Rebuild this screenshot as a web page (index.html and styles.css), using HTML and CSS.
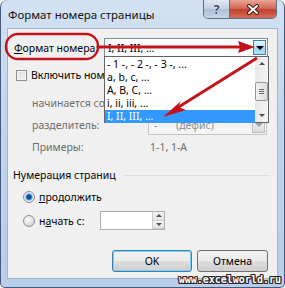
FILE: index.html
```html
<!DOCTYPE html>
<html lang="ru">
<head>
    <meta charset="UTF-8">
    <title>Формат номера страницы</title>
    <link rel="stylesheet" href="styles.css">
</head>
<body>
    <div class="window">
        <div class="titlebar">
            <span class="title">Формат номера страницы</span>
            <div class="caption-buttons">
                <div class="cap-btn help">?</div>
                <div class="cap-btn close">
                    <svg width="14" height="11" viewBox="0 0 14 11">
                        <path d="M3 2 L11 9 M11 2 L3 9" stroke="#4a1a14" stroke-width="4" stroke-linecap="round"/>
                        <path d="M3 2 L11 9 M11 2 L3 9" stroke="#fff" stroke-width="2" stroke-linecap="round"/>
                    </svg>
                </div>
            </div>
        </div>

        <div class="client">
            <div class="format-row">
                <span class="format-label"><u>Ф</u>ормат номера:</span>
                <div class="combo">
                    <span class="combo-text">I, II, III, ...</span>
                    <div class="combo-btn hot"><span class="tri"></span></div>

                    <div class="listbox">
                        <div class="list-items">
                            <div class="list-item">- 1 -, - 2 -, - 3 -, ...</div>
                            <div class="list-item">a, b, c, ...</div>
                            <div class="list-item">A, B, C, ...</div>
                            <div class="list-item">i, ii, iii, ...</div>
                            <div class="list-item selected">I, II, III, ...</div>
                        </div>
                        <div class="scrollbar">
                            <div class="sb-arrow"><span class="tri-up"></span></div>
                            <div class="sb-track">
                                <div class="sb-thumb"><span class="grip"></span></div>
                            </div>
                            <div class="sb-arrow"><span class="tri small"></span></div>
                        </div>
                    </div>
                </div>
            </div>

            <div class="check-row">
                <span class="checkbox"></span>
                <span>Включить номер главы</span>
            </div>

            <div class="chapter-block">
                <div class="dim-row">
                    <span class="dim-label">начинается со стиля</span>
                </div>
                <div class="dim-row">
                    <span class="dim-label">разделитель:</span>
                    <div class="combo disabled">
                        <span class="combo-text"><span class="dash">-</span>(дефис)</span>
                        <div class="combo-btn"><span class="tri pale"></span></div>
                    </div>
                </div>
                <div class="dim-row">
                    <span class="dim-label">Примеры:</span>
                    <span class="example">1-1, 1-A</span>
                </div>
            </div>

            <div class="group-title">
                <span>Нумерация страниц</span>
                <span class="group-line"></span>
            </div>

            <div class="radio-row">
                <span class="radio checked"></span>
                <span><u>п</u>родолжить</span>
            </div>
            <div class="radio-row second">
                <span class="radio"></span>
                <span class="radio-label">н<u>а</u>чать с:</span>
                <div class="spinbox">
                    <span class="spin-text"></span>
                    <div class="spin-btns">
                        <div class="spin-btn"><span class="tri-up tiny"></span></div>
                        <div class="spin-btn"><span class="tri tiny"></span></div>
                    </div>
                </div>
            </div>

            <div class="buttons">
                <div class="button default">OK</div>
                <div class="button cancel">Отмена</div>
            </div>
        </div>

        <svg class="marks" width="285" height="288" viewBox="0 0 285 288">
            <rect x="5" y="34" width="92" height="25" rx="12" ry="12" fill="none" stroke="#c3141b" stroke-width="2.4"/>
            <path d="M97 47 L240 47" stroke="#c3141b" stroke-width="3"/>
            <polygon points="254,47 237,41 239,47 237,53" fill="#c3141b"/>
            <path d="M256 58 L176 108" stroke="#c3141b" stroke-width="3"/>
            <polygon points="162,117 180,101 177,107 185,110" fill="#c3141b"/>
        </svg>

        <div class="watermark">www.excelworld.ru</div>
    </div>
</body>
</html>
```

FILE: styles.css
```css
body {
    margin: 0;
    font-family: "Noto Sans", "Liberation Sans", sans-serif;
    font-size: 10.5px;
    color: #000;
}

.window {
    position: relative;
    width: 285px;
    height: 288px;
    box-sizing: border-box;
    padding: 0 7px 9px 7px;
    border: 1px solid #45597a;
    border-top: 0;
    border-radius: 7px 7px 5px 5px;
    background: linear-gradient(#d3e2f3, #c1d5ec 40%, #b7cde8);
    overflow: hidden;
}

.titlebar {
    display: flex;
    align-items: flex-start;
    height: 29px;
}

.title {
    font-size: 11.5px;
    line-height: 30px;
    color: #111;
}

.caption-buttons {
    display: flex;
    margin-left: auto;
    height: 18px;
    border: 1px solid #5e6f88;
    border-top: 0;
    border-radius: 0 0 5px 5px;
    overflow: hidden;
}

.cap-btn {
    display: flex;
    align-items: center;
    justify-content: center;
    height: 18px;
}

.help {
    width: 25px;
    border-right: 1px solid #5e6f88;
    background: linear-gradient(#dfe7f1, #c2cfdf 50%, #aebed3 51%, #c6d4e4);
    color: #3a4a62;
    font-weight: bold;
    font-size: 12px;
    text-shadow: 0 0 2px #fff;
}

.close {
    width: 46px;
    background: linear-gradient(#e8a596, #d26a56 45%, #c0402c 55%, #d9705c);
}

.client {
    height: 249px;
    box-sizing: border-box;
    background: #f0f0f0;
    box-shadow: 0 0 0 1px #9fb4cf;
    padding-top: 9px;
}

/* format row */
.format-row {
    display: flex;
    align-items: center;
    height: 19px;
    padding-left: 6px;
}

.format-label {
    width: 90px;
    white-space: nowrap;
}

.combo {
    position: relative;
    display: flex;
    align-items: center;
    width: 164px;
    height: 19px;
    box-sizing: border-box;
    border: 1px solid #7a8ea8;
    background: #fff;
}

.combo-text {
    flex: 1;
    padding-left: 3px;
    white-space: nowrap;
}

.combo-btn {
    display: flex;
    align-items: center;
    justify-content: center;
    width: 13px;
    height: 15px;
    margin-right: 1px;
    box-sizing: border-box;
    border: 1px solid #b7c0c9;
    background: linear-gradient(#f4f4f4, #dcdcdc);
}

.combo-btn.hot {
    border-color: #3c7fb1;
    background: linear-gradient(#e5f4fd, #b7e1fa 50%, #9fd4f4 51%, #b3ddf6);
}

.tri {
    width: 0;
    height: 0;
    border-left: 4px solid transparent;
    border-right: 4px solid transparent;
    border-top: 4px solid #000;
}

.tri.pale {
    border-top-color: #a0a0a0;
}

.tri.small {
    border-left-width: 3px;
    border-right-width: 3px;
    border-top: 3px solid #4d4d4d;
}

.tri-up {
    width: 0;
    height: 0;
    border-left: 3px solid transparent;
    border-right: 3px solid transparent;
    border-bottom: 3px solid #4d4d4d;
}

.tri.tiny {
    border-left-width: 3px;
    border-right-width: 3px;
    border-top: 3px solid #555;
}

.tri-up.tiny {
    border-bottom-color: #555;
}

/* dropdown list */
.listbox {
    position: absolute;
    top: 100%;
    left: -1px;
    z-index: 2;
    display: flex;
    width: 165px;
    height: 67px;
    box-sizing: border-box;
    border: 1px solid #646464;
    background: #fff;
}

.list-items {
    flex: 1;
    padding-top: 1px;
}

.list-item {
    height: 13px;
    line-height: 13px;
    padding-left: 2px;
    white-space: nowrap;
}

.list-item.selected {
    background: #3399ff;
    color: #fff;
}

.scrollbar {
    display: flex;
    flex-direction: column;
    width: 13px;
    background: linear-gradient(90deg, #e8e8e8, #f5f5f5);
}

.sb-arrow {
    display: flex;
    align-items: center;
    justify-content: center;
    height: 13px;
}

.sb-track {
    flex: 1;
    padding-top: 12px;
}

.sb-thumb {
    display: flex;
    align-items: center;
    justify-content: center;
    height: 19px;
    box-sizing: border-box;
    border: 1px solid #979797;
    border-radius: 2px;
    background: linear-gradient(90deg, #f2f2f2, #dcdcdc);
}

.grip {
    width: 5px;
    height: 5px;
    background: repeating-linear-gradient(#6d6d6d 0 1px, transparent 1px 2px);
}

/* chapter block */
.check-row {
    display: flex;
    align-items: center;
    height: 14px;
    margin-top: 11px;
    padding-left: 8px;
    gap: 4px;
}

.checkbox {
    width: 11px;
    height: 11px;
    box-sizing: border-box;
    border: 1px solid #8e8f8f;
    background: linear-gradient(135deg, #dcdcdc, #f6f6f6);
    box-shadow: inset 0 0 0 1px #f4f4f4;
}

.chapter-block {
    margin-top: 11px;
    padding-left: 24px;
    color: #6d6d6d;
}

.dim-row {
    display: flex;
    align-items: center;
    height: 20px;
    margin-bottom: 2px;
}

.dim-label {
    width: 116px;
    white-space: nowrap;
}

.combo.disabled {
    width: 119px;
    border-color: #c4c4c4;
    background: #f4f4f4;
    color: #8d8d8d;
}

.dash {
    display: inline-block;
    width: 22px;
    padding-left: 2px;
}

.example {
    padding-left: 2px;
}

/* page numbering */
.group-title {
    display: flex;
    align-items: center;
    height: 16px;
    margin-top: 10px;
    padding-left: 5px;
    gap: 8px;
}

.group-line {
    flex: 1;
    height: 1px;
    margin-right: 7px;
    background: #d5dfe5;
}

.radio-row {
    display: flex;
    align-items: center;
    height: 19px;
    margin-top: 4px;
    padding-left: 15px;
    gap: 4px;
}

.radio-row.second {
    margin-top: 5px;
}

.radio {
    width: 12px;
    height: 12px;
    box-sizing: border-box;
    border: 1px solid #8e8f8f;
    border-radius: 50%;
    background: radial-gradient(circle at 40% 35%, #fefefe, #d9d9d9 70%);
}

.radio.checked {
    background: radial-gradient(circle, #0e4f99 0 2px, #5a9be0 3px, #dfe8f3 4px, #eef2f7);
}

.radio-label {
    width: 57px;
}

.spinbox {
    display: flex;
    width: 65px;
    height: 19px;
    box-sizing: border-box;
    border: 1px solid #abadb3;
    background: #fff;
}

.spin-text {
    flex: 1;
}

.spin-btns {
    display: flex;
    flex-direction: column;
    width: 12px;
}

.spin-btn {
    flex: 1;
    display: flex;
    align-items: center;
    justify-content: center;
    border: 1px solid #c9cdd2;
    border-width: 0 0 1px 1px;
    background: linear-gradient(#f5f5f5, #e3e3e3);
}

.buttons {
    display: flex;
    justify-content: flex-end;
    gap: 5px;
    margin-top: 20px;
    padding-right: 9px;
}

.button {
    display: flex;
    align-items: center;
    justify-content: center;
    height: 22px;
    box-sizing: border-box;
    border: 1px solid #707070;
    border-radius: 3px;
    background: linear-gradient(#f2f2f2, #ebebeb 50%, #dddddd 51%, #cfcfcf);
}

.button.default {
    width: 80px;
    border-color: #3c7fb1;
    box-shadow: inset 0 0 0 1px #7ed2f8;
}

.button.cancel {
    width: 71px;
}

.marks {
    position: absolute;
    left: 0;
    top: 0;
    z-index: 3;
    pointer-events: none;
}

.watermark {
    position: absolute;
    right: 3px;
    bottom: 2px;
    z-index: 4;
    font-family: "DejaVu Sans Mono", monospace;
    font-weight: bold;
    font-size: 10px;
    line-height: 11px;
    color: #fff;
    text-shadow: 1px 0 0 #222, -1px 0 0 #222, 0 1px 0 #222, 0 -1px 0 #222,
                 1px 1px 0 #222, -1px -1px 0 #222, 1px -1px 0 #222, -1px 1px 0 #222;
}
```
